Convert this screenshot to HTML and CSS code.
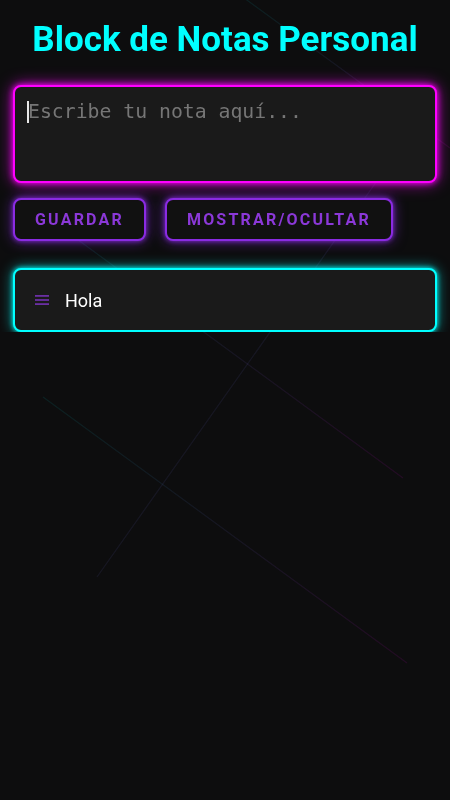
FILE: index.html
```html
<!DOCTYPE html>
<html lang="es">
<head>
<meta charset="utf-8">
<title>Block de Notas Personal</title>
<link rel="stylesheet" href="styles.css">
</head>
<body>
<div class="bg-lines" aria-hidden="true">
  <svg width="450" height="800" viewBox="0 0 450 800">
    <defs>
      <linearGradient id="g1" x1="0" y1="0" x2="1" y2="1">
        <stop offset="0" stop-color="#00ffff" stop-opacity="0.08"/>
        <stop offset="1" stop-color="#ff00ff" stop-opacity="0.09"/>
      </linearGradient>
    </defs>
    <line x1="240" y1="-5" x2="450" y2="148" stroke="url(#g1)" stroke-width="1.2"/>
    <line x1="40" y1="212" x2="403" y2="478" stroke="url(#g1)" stroke-width="1.2"/>
    <line x1="420" y1="120" x2="97" y2="577" stroke="url(#g1)" stroke-width="1.2"/>
    <line x1="43" y1="397" x2="407" y2="663" stroke="url(#g1)" stroke-width="1.2"/>
  </svg>
</div>
<main class="app">
  <h1 class="title">Block de Notas Personal</h1>
  <div class="input-wrap">
    <textarea class="note-input" placeholder="Escribe tu nota aquí..."></textarea>
    <span class="caret"></span>
  </div>
  <div class="actions">
    <button class="btn">Guardar</button>
    <button class="btn">Mostrar/Ocultar</button>
  </div>
  <ul class="notes">
    <li class="note">
      <svg class="handle" width="14" height="12" viewBox="0 0 14 12">
        <rect x="0" y="1" width="14" height="1.8" fill="currentColor"/>
        <rect x="0" y="5.1" width="14" height="1.8" fill="currentColor"/>
        <rect x="0" y="9.2" width="14" height="1.8" fill="currentColor"/>
      </svg>
      <span class="note-text">Hola</span>
    </li>
  </ul>
</main>
</body>
</html>
```
FILE: styles.css
```css
html, body {
  margin: 0;
  padding: 0;
  background: #0d0d0e;
  min-height: 100%;
}

body {
  font-family: Roboto, "Liberation Sans", sans-serif;
  color: #fff;
}

.bg-lines {
  position: fixed;
  inset: 0;
  z-index: 0;
  pointer-events: none;
}

.bg-lines svg {
  display: block;
}

.app {
  position: relative;
  z-index: 1;
  padding: 0 13px;
  display: flex;
  flex-direction: column;
}

.title {
  margin: 19px 0 25px;
  font-size: 35px;
  line-height: 41px;
  font-weight: 700;
  text-align: center;
  color: #00ffff;
}

.input-wrap {
  position: relative;
  margin: 0 0 15px;
}

.note-input {
  display: block;
  box-sizing: border-box;
  width: 100%;
  height: 98px;
  margin: 0;
  padding: 13px 12px 12px 13px;
  background: #1a1a1a;
  border: 2px solid #ff00ff;
  border-radius: 8px;
  box-shadow: 0 0 6px #ff00ff, 0 0 16px rgba(255, 0, 255, 0.7);
  color: #ddd;
  caret-color: #fff;
  font-family: "DejaVu Sans Mono", monospace;
  font-size: 19.8px;
  resize: none;
  outline: none;
}

.note-input::placeholder {
  color: #767676;
}

.caret {
  position: absolute;
  left: 14px;
  top: 16px;
  width: 1.5px;
  height: 22px;
  background: #e8e8e8;
}

.actions {
  display: flex;
  gap: 19px;
  margin-bottom: 27px;
}

.btn {
  box-sizing: border-box;
  height: 43px;
  padding: 0 20px;
  background: #111;
  border: 2px solid #8a2be2;
  border-radius: 8px;
  box-shadow: 0 0 5px rgba(138, 43, 226, 0.9), 0 0 14px rgba(138, 43, 226, 0.6);
  color: #8b38d8;
  font-family: Roboto, sans-serif;
  font-size: 16px;
  font-weight: 700;
  letter-spacing: 2.2px;
  text-transform: uppercase;
}

.notes {
  list-style: none;
  margin: 0;
  padding: 0;
}

.note {
  box-sizing: border-box;
  height: 64px;
  display: flex;
  align-items: center;
  gap: 16px;
  padding: 0 20px;
  background: #1a1a1a;
  border: 2px solid #00ffff;
  border-radius: 8px;
  box-shadow: 0 0 5px #00ffff, 0 0 14px rgba(0, 255, 255, 0.6);
}

.handle {
  color: #6a2fa3;
  flex: none;
}

.note-text {
  font-size: 18px;
  color: #fff;
}
```
